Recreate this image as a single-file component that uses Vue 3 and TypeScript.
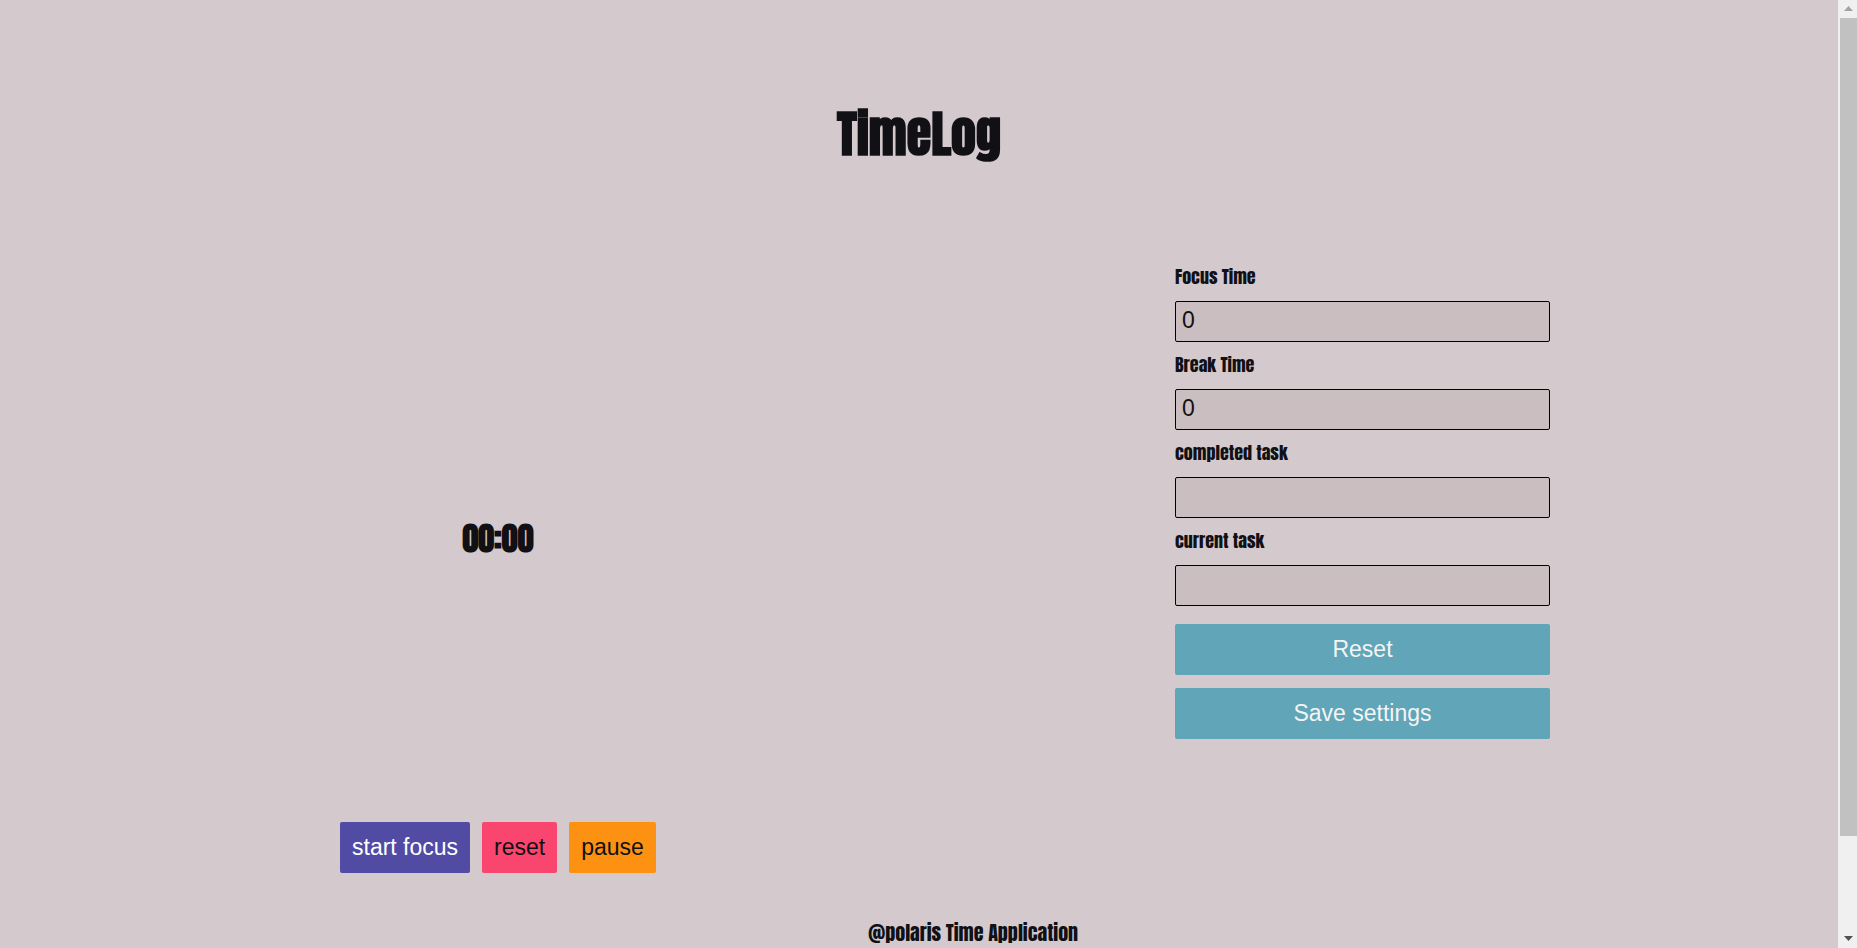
<script setup lang="ts">
import { reactive, ref } from 'vue'

interface Field {
  id: string
  label: string
  value: string
}

const initial = ['0', '0', '', '']
const fields = reactive<Field[]>([
  { id: 'focus-time', label: 'Focus Time', value: '0' },
  { id: 'break-time', label: 'Break Time', value: '0' },
  { id: 'completed-task', label: 'completed task', value: '' },
  { id: 'current-task', label: 'current task', value: '' },
])
const clock = ref('00:00')

function resetForm() {
  fields.forEach((field, i) => (field.value = initial[i]))
}
function resetClock() {
  clock.value = '00:00'
}
</script>

<template>
  <div class="window">
    <div class="page">
      <header class="header">
        <h1 class="title">TimeLog</h1>
      </header>
      <main class="main">
        <section class="timer">
          <div class="clock">{{ clock }}</div>
          <div class="actions">
            <button type="button" class="btn start">start focus</button>
            <button type="button" class="btn reset" @click="resetClock">reset</button>
            <button type="button" class="btn pause">pause</button>
          </div>
        </section>
        <form class="settings" @submit.prevent>
          <div v-for="field in fields" :key="field.id" class="field">
            <label :for="field.id">{{ field.label }}</label>
            <input :id="field.id" v-model="field.value" type="text" />
          </div>
          <div class="submit">
            <button type="button" class="btn save" @click="resetForm">Reset</button>
            <button type="submit" class="btn save">Save settings</button>
          </div>
        </form>
      </main>
      <footer class="footer">@polaris Time Application</footer>
    </div>
    <div class="scrollbar" aria-hidden="true">
      <svg class="arrow" viewBox="0 0 17 18"><path d="M4 11L8.500 6L13 11Z" fill="#a3a3a3" /></svg>
      <div class="track"><div class="thumb"></div></div>
      <svg class="arrow" viewBox="0 0 17 18"><path d="M4 6L8.500 11L13 6Z" fill="#505050" /></svg>
    </div>
  </div>
</template>

<style>
body {
  margin: 0;
  background: #d4c9cd;
}
</style>

<style scoped>
.window {
  display: flex;
  height: 100vh;
  overflow: hidden;
  color: #111115;
  background: #d4c9cd;
  font-family: Impact, Anton, "Roboto Condensed", "Liberation Sans", sans-serif;
  font-weight: 400;
}
.page {
  flex: 1;
  display: flex;
  flex-direction: column;
}
.header {
  padding: 104px 0 100px;
  text-align: center;
}
.title {
  margin: 0;
  font-size: 50px;
  line-height: 60px;
  font-weight: 700;
}
.main {
  display: grid;
  grid-template-columns: 1fr 375px;
  align-items: start;
  padding: 0 288px 0 340px;
}
.timer {
  display: flex;
  flex-direction: column;
  justify-self: start;
}
.clock {
  padding: 256px 0 264px;
  font-size: 32px;
  line-height: 38px;
  font-weight: 700;
  text-align: center;
}
.actions {
  display: flex;
  gap: 12px;
}
.btn {
  height: 51px;
  padding: 0 12px;
  border: 0;
  border-radius: 2px;
  font-family: "Liberation Sans", Arial, sans-serif;
  font-size: 23px;
  white-space: nowrap;
}
.start {
  color: #fff;
  background: #524ba4;
}
.reset {
  color: #111115;
  background: #fa466e;
}
.pause {
  color: #111115;
  background: #fd9111;
}
.settings {
  display: flex;
  flex-direction: column;
}
.field {
  display: flex;
  flex-direction: column;
  height: 88px;
}
.field label {
  height: 37px;
  font-size: 18px;
  line-height: 26px;
}
.field input {
  box-sizing: border-box;
  width: 100%;
  height: 41px;
  padding: 0 6px 3px;
  border: 1px solid #000;
  border-radius: 2px;
  color: #111115;
  background: #cabec0;
  font-family: "Liberation Sans", Arial, sans-serif;
  font-size: 23px;
}
.submit {
  display: flex;
  flex-direction: column;
  gap: 13px;
  padding-top: 8px;
}
.save {
  color: #f4f4f4;
  background: #61a5b8;
}
.footer {
  padding: 46px 0 0 108px;
  font-size: 20px;
  line-height: 28px;
  text-align: center;
}
.scrollbar {
  display: flex;
  flex-direction: column;
  width: 17px;
  padding-left: 2px;
  background: #f0f0f0;
}
.arrow {
  display: block;
  height: 18px;
}
.track {
  flex: 1;
}
.thumb {
  height: calc(90% - 3px);
  background: #c1c1c1;
}
</style>
